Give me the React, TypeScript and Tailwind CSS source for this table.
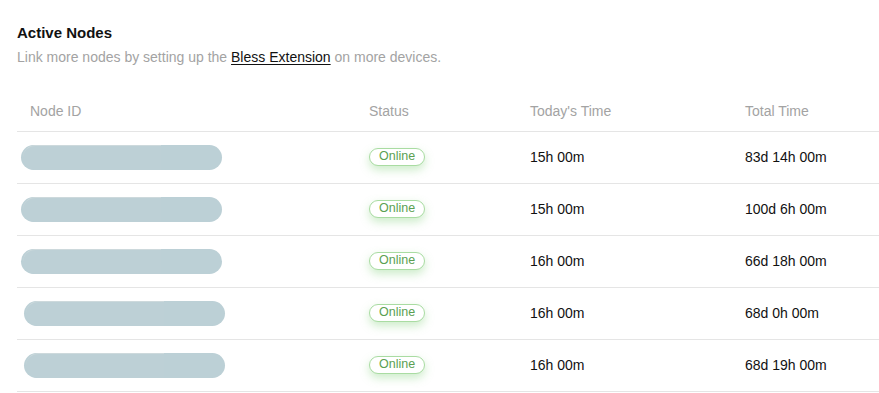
const rows = [
  { today: "15h 00m", total: "83d 14h 00m", shift: false },
  { today: "15h 00m", total: "100d 6h 00m", shift: false },
  { today: "16h 00m", total: "66d 18h 00m", shift: false },
  { today: "16h 00m", total: "68d 0h 00m", shift: true },
  { today: "16h 00m", total: "68d 19h 00m", shift: true },
];

function BlurredId({ shift }: { shift: boolean }) {
  // node id is hidden behind a soft blur bar
  return (
    <div className={shift ? "pl-[7px]" : "pl-[4px]"}>
      <div className="relative h-[25px] w-[201px] rounded-full bg-[#bcd0d6]">
        <div className="absolute left-[2px] top-0 h-[25px] w-[138px] rounded-l-full border-t border-[#cdd9dc] bg-[#bdd0d6]" />
      </div>
    </div>
  );
}

export default function App() {
  return (
    <div className="min-h-screen bg-white pl-[17px] pt-[23px] font-['Liberation_Sans',Arial,sans-serif]">
      <h2 className="text-[15px] font-bold leading-[20px] text-[#111]">Active Nodes</h2>
      <p className="mt-[6px] text-[14px] leading-[17px] text-[#a3a3a3]">
        Link more nodes by setting up the{" "}
        <a href="#" className="text-[#111] underline underline-offset-2">Bless Extension</a> on more devices.
      </p>

      <div className="mt-[25px]">
        <div className="grid h-[41px] grid-cols-[339px_161px_215px_1fr] items-center border-b border-[#e5e5e5] text-[14px] text-[#a3a3a3]">
          <div className="pl-[13px]">Node ID</div>
          <div className="pl-[13px]">Status</div>
          <div className="pl-[13px]">Today's Time</div>
          <div className="pl-[13px]">Total Time</div>
        </div>
        {rows.map((r, i) => (
          <div
            key={i}
            className="grid h-[52px] grid-cols-[339px_161px_215px_1fr] items-center border-b border-[#e5e5e5] text-[14px] text-[#111]"
          >
            <BlurredId shift={r.shift} />
            <div className="flex pl-[13px] -mt-[2px]">
              <span className="inline-flex h-[18px] items-center rounded-full border border-[#a9dca2] bg-white px-[9px] text-[12.5px] text-[#5b9f52] shadow-[0_4px_10px_rgba(110,200,100,0.35)]">
                Online
              </span>
            </div>
            <div className="pl-[13px]">{r.today}</div>
            <div className="pl-[13px]">{r.total}</div>
          </div>
        ))}
      </div>
    </div>
  );
}
